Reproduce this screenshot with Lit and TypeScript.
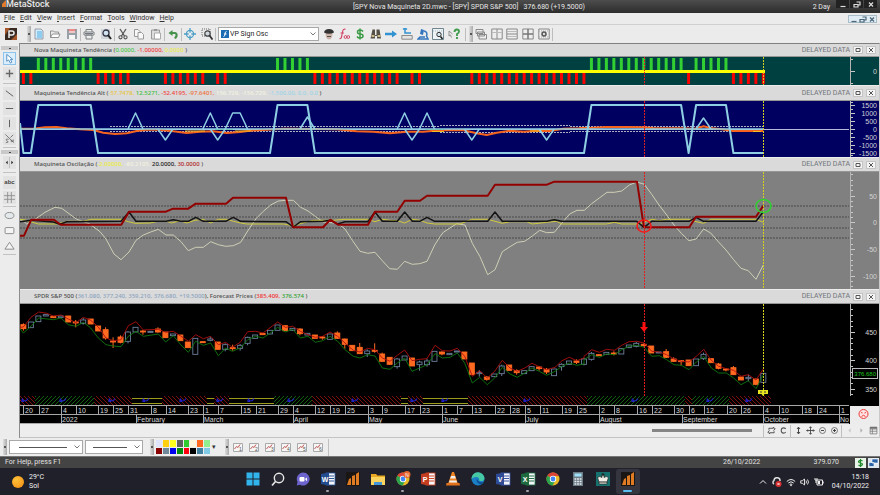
import { LitElement, html, svg, css, nothing } from "lit";
import { customElement, property } from "lit/decorators.js";

type Run = [number, string];

/* Series are stored in thirds of a pixel: each run has its own x origin. */
const series = (runs: Run[], top: number) =>
  runs
    .map(([origin, data]) =>
      data
        .trim()
        .split(/\s+/)
        .map((p) => {
          const [x, y] = p.split(",").map(Number);
          return `${((x + origin) / 3).toFixed(1)},${((y - top) / 3).toFixed(1)}`;
        })
        .join(" ")
    )
    .join(" ");

const A = -60;
const B = 810;
const C = 1680;
const M = 1260;

const barX = (i: number) => 3.4 + 7.474 * i;
const span = (from: number, to: number) => Array.from({ length: to - from + 1 }, (_, k) => from + k);

/* ---------- trend bars ---------- */
const upBars = [...span(2, 9), ...span(34, 38), ...span(76, 88), ...span(90, 94)];
const downBars = [0, 1, ...span(10, 14), ...span(19, 24), 26, 27, ...span(39, 50), 52, 53, ...span(60, 75), 89, ...span(95, 99)];

/* ---------- alternate trend ---------- */
const highRuns = [[2, 9], [34, 38], [76, 88], [90, 94]];
const squareWave =
  "0,22 " +
  span(0, 99)
    .map((i) => `${barX(i).toFixed(1)},${highRuns.some(([a, b]) => i >= a && i <= b) ? 4 : 52}`)
    .join(" ");
const spikes: [number[], number][] = [
  [[14, 15, 16], 12], [[18, 19, 20], 39], [[24, 25, 26], 12], [[25, 26, 27], 39], [[27, 28, 29, 30], 12],
  [[37, 38, 39], 16], [[50, 51, 52], 12], [[51, 52, 53], 39], [[53, 54, 55], 12], [[59, 60, 61], 39],
  [[69, 70, 71], 39], [[90, 91, 92], 17],
];
const orangeRuns: Run[] = [
  [A, "60,266 100,266 135,262 170,261 200,265 240,268 280,270 310,278 345,282 380,280 410,273 440,269 480,269 520,274 560,279 600,275 640,274 680,279 720,276 750,272 800,269 850,266"],
  [B, "0,266 140,268 200,274 250,275 300,280 350,275 400,275 450,271 520,271 560,280 590,285 620,278 660,272 700,275 740,272 780,273 820,266 870,265"],
  [C, "0,264 30,264 80,261 140,261 190,262 220,264 300,265 345,266 371,259 390,264 425,268 460,273 500,273 550,273"],
];

/* ---------- oscillator ---------- */
const oscRed: Run[] = [
  [A, "60,242 72,242 94,194 162,194 182,209 364,209 387,170 498,170 519,161 565,161 587,146 678,146 699,128 858,128 879,217 969,217 991,194 1014,209 1104,209 1125,170 1192,170 1214,137 1260,137 1281,122 1320,122"],
  [M, "0,122 143,122 165,89 321,89 343,80 591,80 612,217 748,217 768,185 948,185 970,152"],
];
const oscWhite: Run[] = [
  [A, "60,198 68,196 80,207 105,193 135,172 165,157 185,160 230,193 268,206 300,230 318,252 342,297 363,314 387,291 408,256 430,240 452,231 475,223 498,240 520,240 543,260 565,287 587,277 610,277 632,260 655,269 677,274 700,272 722,262 745,225 768,191 790,169 812,150 835,138 858,136 880,136 902,157 924,168 947,185 970,201 1013,205 1035,222 1057,256 1080,289 1103,295 1125,292 1147,317 1169,341 1192,343 1214,319 1237,328 1259,326 1281,319 1304,270 1320,245"],
  [M, "10,232 50,206 75,210 97,265 120,305 143,359 165,344 187,290 210,275 232,262 254,259 277,243 299,226 320,233 343,232 365,205 389,177 411,166 433,166 455,146 478,129 501,112 523,112 545,108 568,90 590,81 613,88 635,118 657,150 680,180 702,210 725,236 747,257 768,252 791,222 812,234 835,260 858,285 880,313 903,340 925,347 948,373 970,330"],
];
const oscBlack: Run[] = [
  [A, "60,200 94,196 160,201 180,208 200,200 363,199 387,171 408,199 498,199 520,194 543,199 565,199 587,187 610,199 677,199 700,187 722,199 858,200 880,216 902,200 970,199 991,196 1013,207 1035,200 1103,200 1125,171 1147,199 1192,199 1214,171 1237,199 1259,199 1281,187 1304,199"],
  [M, "0,199 143,199 165,171 187,199 320,199 343,194 365,199 590,199 612,217 635,199 747,199 768,187 791,199 948,199 970,170"],
];
const oscYellow: Run[] = [
  [A, "60,193 75,195 115,207 170,207 205,199 250,199 272,193 363,193 385,200 405,205 450,204 475,199 500,199 515,204 540,197 560,204 585,196 610,193 632,204 655,193 680,193 700,199 722,204 740,207 850,207 880,212 905,205 940,196 1000,196 1035,193 1103,193 1125,200 1147,193 1170,196 1192,197 1214,204 1237,193 1260,196 1281,204 1304,207"],
  [M, "0,207 60,207 95,193 143,193 187,205 210,200 260,200 277,207 320,202 350,199 365,207 500,207 523,202 545,207 600,207 615,200 637,193 655,197 680,193 750,193 768,200 791,205 812,193 948,193 970,202"],
];

/* ---------- price ---------- */
/* kind, body top, body bottom, high, low */
const candles = `o110,122,106,128 g102,119 g84,101 g80,84 o85,89 g84,88 o84,102 o102,105,96,118 g96,106,90,110 o93,108
o114,129 o125,150,118,155 o159,162,148,180 o147,163,142,166 g132,160,130,166 g118,132 o129,132,126,140 g130,133 o123,132,118,134 o132,149
g138,143 o141,158 o162,179 g151,199 o161,164 g153,157,146,160 o162,184 g170,184,166,190 o179,182,170,188 g172,181,168,188
g148,166,146,172 g141,151 o136,140 g127,138 g111,127 o113,128 g121,127 o123,137,121,142 g136,141 o141,151
o147,149,144,155 g138,154 o135,151,130,152 o153,169,152,182 o172,188 o178,197,165,198 g189,197,184,207 o187,190,166,194 o198,220,194,221 o208,229
g213,236,210,242 g204,216 o210,234 g222,230,218,248 g219,230,212,236 g190,220 o192,198,190,202 g196,200 g189,192 o192,213
o225,260 g253,257,246,266 o267,274,264,278 g258,266 g234,257,230,264 o231,247 o248,254,244,260 g248,257 g236,248 o237,242,234,248
o244,252,240,258 g243,263 g229,236,226,248 g219,229 o219,223,214,228 g213,229,210,232 g196,214,192,218 o200,203 g193,199 o195,198,190,202
g182,198 g171,179 g166,175,162,178 o169,173,166,176 o174,195 g192,195 o191,208,183,210 o213,220,208,222 o218,221,216,233 o216,233
g213,233 g199,212,194,216 o212,224 o228,241,225,244 o243,246,240,250 o239,260,234,261 o267,276 g268,272,260,280 o273,289,272,292 g256,283`
  .split(/\s+/)
  .map((c) => {
    const [top, bottom, high = top, low = bottom] = c.slice(1).split(",").map(Number);
    const y = (v: number) => (v - 48) / 3;
    return { up: c[0] === "g", top: y(top), bottom: y(bottom), high: y(high), low: y(low) };
  });
const forecastHigh: Run[] = [
  [A, "60,118 70,117 93,88 116,72 140,76 160,84 183,81 205,93 228,104 250,88 272,97 295,117 318,150 340,158 363,155 385,113 408,101 430,126 475,124 497,133 520,130 542,144 565,160 587,140 610,152 632,145 655,170 677,163 697,178 721,163 743,131 767,130 789,135 833,102 856,118 878,115"],
  [B, "31,130 54,140 76,148 98,145 120,132 143,145 165,165 190,187 210,192 233,181 255,185 277,210 300,220 322,202 344,186 366,218 389,214 411,212 435,172 457,188 480,189 502,181 524,205 547,265 569,248 592,270 614,250 637,217 660,240 682,250 704,240 726,226 748,236 770,245 795,238 816,218 838,208 860,218 882,210"],
  [C, "12,205 35,185 58,193 80,184 104,187 125,172 147,161 170,160 193,165 215,190 238,192 260,200 282,213 304,220 327,222 349,205 371,184 394,217 416,235 439,242 461,247 483,265 505,260 528,276 550,243"],
];
const forecastLow: Run[] = [
  [A, "60,122 70,135 93,115 116,90 160,95 183,90 205,110 228,115 250,103 272,120 295,150 318,170 340,174 363,176 385,145 408,130 430,145 475,138 497,162 520,143 542,170 565,193 587,160 610,172 632,165 655,203 677,180 697,190 721,180 743,155 767,145 789,150 811,135 833,118 856,132 878,124"],
  [B, "31,150 54,145 76,163 98,158 120,145 143,160 165,185 190,205 210,210 233,200 255,204 277,240 300,244 322,225 344,210 366,250 389,240 411,230 435,197 457,210 480,208 502,195 524,225 547,285 569,268 592,290 614,270 637,238 660,258 682,268 704,255 726,240 748,250 770,262 795,250 816,235 838,225 860,232 882,228"],
  [C, "12,215 35,200 58,208 80,198 104,200 125,185 147,175 170,172 193,178 215,205 238,203 260,215 282,230 304,232 327,245 349,222 371,205 394,240 416,255 439,255 461,270 483,290 505,278 528,302 550,260"],
];
/* ribbon: kind and edges, in pixels */
const ribbon: [string, number, number][] = [
  ["r", 0, 15], ["g", 15, 74], ["r", 74, 112], ["y", 112, 142], ["r", 142, 187], ["y", 187, 194], ["r", 194, 209],
  ["y", 209, 254], ["g", 254, 292], ["r", 292, 381], ["y", 381, 388], ["r", 388, 403], ["y", 403, 448], ["r", 448, 567],
  ["g", 567, 665], ["r", 665, 672], ["g", 672, 709], ["r", 709, 751],
];
const cycles = [5, 43, 92, 126, 163, 200, 231, 271, 335, 394, 425, 507, 615, 690, 729];
const days: [number, string][] = [
  [3, "20"], [19, "27"], [41, "4"], [56, "10"], [78, "19"], [93, "25"], [108, "31"], [131, "8"], [146, "14"], [168, "23"],
  [183, "1"], [198, "7"], [221, "15"], [236, "21"], [258, "29"], [273, "4"], [295, "12"], [310, "19"], [325, "25"],
  [348, "3"], [362, "9"], [385, "17"], [400, "23"], [422, "1"], [437, "7"], [452, "13"], [475, "22"], [490, "28"],
  [505, "5"], [520, "11"], [542, "19"], [557, "25"], [579, "2"], [594, "8"], [617, "16"], [632, "22"], [654, "30"],
  [669, "6"], [684, "12"], [707, "20"], [721, "26"], [743, "4"], [759, "10"], [782, "18"], [797, "24"], [819, "1"],
];
const months: [number, string][] = [
  [41, "2022"], [116, "February"], [183, "March"], [273, "April"], [348, "May"], [422, "June"], [505, "July"],
  [579, "August"], [662, "September"], [743, "October"], [819, "Nov"],
];

/* ---------- icons, 12 x 12 ---------- */
const icons: Record<string, unknown> = {
  power: svg`<rect width="12" height="12" fill="#3a2a22"/><path d="M0 0h5L0 7zM12 12H6l6-6z" fill="#a5562a"/><path d="M4 10V3h3a2 2 0 0 1 0 4H4" fill="none" stroke="#eee" stroke-width="1.5"/>`,
  new: svg`<path d="M2 1h6l2 2v8H2z" fill="#d3ecfa" stroke="#889" stroke-width=".8"/><path d="M4 3h5v7H4z" fill="#8fcdf0"/>`,
  open: svg`<path d="M1.500 9.500V3h3l1 1h4v2" fill="none" stroke="#888" stroke-width=".9"/><path d="M1.500 9.500 3.500 6H11L9.500 9.500z" fill="#fff" stroke="#888" stroke-width=".9"/>`,
  save: svg`<path d="M1 1h10v10H1z" fill="#9aa0a8"/><path d="M3 1h6v4H3z" fill="#f3c6c6"/><path d="M3 7h6v4H3z" fill="#f6f6f6"/><path d="M2.500 2h7" stroke="#e05050"/>`,
  print: svg`<path d="M3 4V1.500h6V4M1 4h10v3H1zM3 7h6v4H3z" fill="#eee" stroke="#7a8080" stroke-width="1"/><path d="M2 5.500h8" stroke="#778" stroke-width="1"/>`,
  preview: svg`<path d="M1 1h9v10H1z" fill="#cdd4da"/><circle cx="6" cy="5" r="3" fill="#cfe3f1" stroke="#334" stroke-width="1.300"/><path d="m8 7 3 4" stroke="#222" stroke-width="2"/>`,
  cut: svg`<path d="M3 1l4.500 7M9 1 4.500 8" stroke="#555" stroke-width="1.300"/><circle cx="3.500" cy="9.300" r="1.600" fill="none" stroke="#555" stroke-width="1.100"/><circle cx="8.500" cy="9.300" r="1.600" fill="none" stroke="#555" stroke-width="1.100"/>`,
  copy: svg`<path d="M1.500 1.500H5l2 2v5H1.500z" fill="#f8f8f8" stroke="#999"/><path d="M5 4.500h3.500l2 2v4.500H5z" fill="#f8f8f8" stroke="#999"/>`,
  paste: svg`<path d="M1.500 2h8v9h-8z" fill="#ddd" stroke="#999"/><path d="M4 1h3v2H4z" fill="#999"/><path d="M4.500 5h6v6h-6z" fill="#fff" stroke="#aaa"/>`,
  undo: svg`<path d="M1.500 5 5.500 2v6z" fill="#47924b"/><path d="M4 5h3.500Q10 5 9.500 8L8 10.500" fill="none" stroke="#47924b" stroke-width="2.200"/>`,
  cross: svg`<circle cx="6" cy="6" r="3.600" fill="none" stroke="#4f9fc6" stroke-width="1.200"/><path d="M6 0v12M0 6h12" stroke="#4f9fc6" stroke-width="1.300"/><circle cx="6" cy="6" r="1.500" fill="#e9f3f8"/>`,
  zoomsel: svg`<path d="M1 1h8v7H1z" fill="none" stroke="#666" stroke-dasharray="1 1"/><circle cx="6.500" cy="5.500" r="2.700" fill="#d0d8de" stroke="#444" stroke-width="1.200"/><path d="m8.500 7.500 3 4" stroke="#333" stroke-width="1.800"/>`,
  expert: svg`<path d="M2.500 5h7q0 6-3.500 6.500Q2.500 11 2.500 5z" fill="#cdb4a8"/><path d="M1 4.500Q1.500 1 6 1t5 3.500Q6 7 1 4.500z" fill="#333"/><path d="M4 8.500h4" stroke="#555"/>`,
  fx: svg`<path d="M7.500 1.300Q5 .5 4.500 4L3.500 9Q3 11 1.500 10.500M2.500 5H6" fill="none" stroke="#d24a68" stroke-width="1.200"/><circle cx="7.500" cy="9" r="1.400" fill="none" stroke="#d24a68"/><circle cx="10.300" cy="9" r="1.400" fill="none" stroke="#d24a68"/>`,
  dollar: svg`<path d="M9 3.500Q8 2 6 2 3.500 2 3.500 4T6 6q3 0 3 2t-3 2q-2 0-3-1.500M6 .5v11" fill="none" stroke="#3a9a45" stroke-width="1.500"/>`,
  binoc: svg`<path d="M2.500 1.500h2.500V7H6.500V1.500H9.500L11 10.500H7V8H5v2.500H.500z" fill="#555044"/><path d="M1.500 8h3M7.500 8h3" stroke="#c9b98c" stroke-width="2"/>`,
  arrow: svg`<path d="M0 4.700h7V2.500L12 6 7 9.500V7.300H0z" fill="#3292d2"/>`,
  tray: svg`<path d="M.800 7.500h10.400v3.700H.800z" fill="#e3e3e3" stroke="#8b8b8b"/><path d="M2 1.500 4 0l2 1.500M4 .500V5h6" fill="none" stroke="#3292d2" stroke-width="1.500"/>`,
  scope: svg`<path d="M4 1l3 1-1 5-3-1z" fill="#3275bd"/><path d="M7 3q4 1 2.500 5L11 11H1l2-2h5" fill="none" stroke="#3275bd" stroke-width="1.500"/>`,
  explore: svg`<path d="M.5.5h11v11H.5z" fill="#edf3f5" stroke="#70858d"/><path d="M1 3h10" stroke="#a9b9c0" stroke-dasharray="1 1"/><circle cx="7" cy="6.500" r="2.200" fill="#d7e6ee" stroke="#333"/><path d="m8.500 8.500 2 2.500" stroke="#222" stroke-width="1.600"/>`,
  help: svg`<path d="M1 3v5l1.500-1 1 2.500M1 3l3.500 3" fill="none" stroke="#888" stroke-width=".9"/><path d="M6.500 4q0-2.500 2.300-2.500T11 3.500Q11 5 9 6v2M9 9v2" fill="none" stroke="#3d9a48" stroke-width="1.800"/>`,
  cascade: svg`<path d="M1 1.500h7v4H1zM2.500 4h7v4h-7zM4 6.500h7.500v4.500H4z" fill="#eee" stroke="#888"/>`,
  tileV: svg`<path d="M.8 1h10.400v10H.8zM6 1v10" fill="#eee" stroke="#888"/><path d="M1 4.500h10" stroke="#bbb"/>`,
  tileH: svg`<path d="M.8 1h10.400v10H.8zM1 6h10" fill="#eee" stroke="#888"/><path d="M1 3.500h10M1 8.500h10" stroke="#bbb"/>`,
  tile4: svg`<path d="M.8 1h10.400v10H.8z" fill="#eee" stroke="#888"/><path d="M6 1v10M1 6h10" stroke="#777" stroke-width="1.500"/>`,
  gear: svg`<path d="M.8 1h10.400v10H.8z" fill="#eee" stroke="#888"/><path d="M1 3h10M1 9h10" stroke="#aaa" stroke-dasharray="1 1"/><circle cx="6" cy="6" r="2" fill="#ddd" stroke="#555" stroke-width="1.500"/>`,
  pointer: svg`<path d="M3 1.500v7.500l2-1.500 2 3.500 1.500-1L7 7h2.500z" fill="#fff" stroke="#4a8bbf"/>`,
  plus: svg`<path d="M6 2v8M2 6h8" stroke="#666" stroke-width="1.500"/>`,
  diag: svg`<path d="m2 3 8 6" stroke="#555"/>`,
  horiz: svg`<path d="M2 6h8" stroke="#555"/>`,
  vert: svg`<path d="M6 2v8" stroke="#555"/>`,
  sn: svg`<path d="m1.500 1.500 9 9M10 2 7 5M5 7q-2-1-2.500 0T4 9 2 10.500M8 10V7.500l2 2V7" fill="none" stroke="#666" stroke-width=".9"/>`,
  arrows: svg`<path d="M4 4 2 6l2 2zM8 4l2 2-2 2z" fill="#222"/><path d="M6 0v12" stroke="#bbb"/>`,
  grid: svg`<path d="M4 0v12M8 0v12M0 4h12M0 8h12" stroke="#888" stroke-width=".9"/>`,
  ellipse: svg`<ellipse cx="6" cy="6" rx="4.800" ry="3.300" fill="#e3e8ea" stroke="#888"/>`,
  rect: svg`<rect x="1.200" y="2.800" width="9.600" height="6.600" rx="1" fill="#f4f4f4" stroke="#888"/>`,
  tri: svg`<path d="m6 2.500 5 7.500H1z" fill="#f4f4f4" stroke="#888"/>`,
  refresh: svg`<path d="M2.500 5V3h6V1.500L11 4 8.500 6M9.500 7v2h-6v1.500L1 8l2.500-2" fill="none" stroke="#444" stroke-width="1.200"/>`,
  loop: svg`<path d="M9 4Q8 2.500 6 2.500 3 2.500 3 6t3 3.500Q8 9.500 9 8" fill="none" stroke="#555" stroke-width="1.400"/>`,
  updown: svg`<path d="M6 2v8M4 4l2-2.500L8 4M4 8l2 2.500L8 8" fill="none" stroke="#333" stroke-width="1.200"/>`,
  move: svg`<path d="M6 1v10M1 6h10M4.500 2.500 6 1l1.500 1.500M4.500 9.500 6 11l1.500-1.500M2.500 4.500 1 6l1.500 1.500M9.500 4.500 11 6 9.500 7.500" fill="none" stroke="#444" stroke-width="1.200"/>`,
  minus: svg`<circle cx="6" cy="6" r="4" fill="none" stroke="#555"/><path d="M4 6h4" stroke="#333" stroke-width="1.200"/>`,
  zoomin: svg`<circle cx="6" cy="6" r="4" fill="none" stroke="#555"/><path d="M4 6h4M6 4v4" stroke="#333" stroke-width="1.200"/>`,
  left: svg`<path d="M7.500 3 4.500 6l3 3z" fill="#c8c8c8"/>`,
  right: svg`<path d="m4.500 3 3 3-3 3z" fill="#b0b0b0"/>`,
  sheet: svg`<path d="M1.500 1.500h9v9h-9zM1.500 4h9M1.500 7h9M4.500 4v6.500" fill="#eee" stroke="#777"/><path d="M1.500 2.500h9" stroke="#666" stroke-width="2"/>`,
};
const icon = (name: string) => html`<svg class="icon" viewBox="0 0 12 12" aria-hidden="true">${icons[name]}</svg>`;

const office = (color: string, dark: string, letter: string) => svg`
  <rect x="6" y="2" width="9" height="12" fill="#f4f6fa" stroke=${color} stroke-width=".8"/>
  <path d="M9 5h5M9 7.500h5M9 10h5" stroke=${color}/><path d="M1 3l8-1.500v13L1 13z" fill=${dark}/>
  <text x="5" y="11" text-anchor="middle" font-size="7" font-weight="700" fill="#fff">${letter}</text>`;
const chrome = svg`<circle cx="8" cy="8" r="6.500" fill="#e9b928"/><path d="M8 8 2.400 4.700A6.500 6.500 0 0 1 13.700 5H8z" fill="#dc4437"/><path d="M8 8 2.400 4.700A6.500 6.500 0 0 0 7.500 14.500L10.500 9.500z" fill="#2ba24c"/><circle cx="8" cy="8" r="3.200" fill="#fff"/><circle cx="8" cy="8" r="2.400" fill="#4285f4"/>`;
const stock = svg`<path d="M1 1h14v14H1z" fill="#191614"/><path d="M2 14 4 8l2-1v7zM7 14V5l3-1v10zM11 14V3l3-2v13z" fill="#df7b23"/>`;
const apps: { name: string; art: unknown; run?: boolean; active?: boolean }[] = [
  { name: "Start", art: svg`<path d="M1.500 1.500h6v6h-6zM8.500 1.500h6v6h-6zM1.500 8.500h6v6h-6zM8.500 8.500h6v6h-6z" fill="#31b4ec"/>` },
  { name: "Search", art: svg`<circle cx="9" cy="7" r="4.700" fill="#2c2d36" stroke="#e8e8e8" stroke-width="1.400"/><path d="m5.500 10.500-3.500 4" stroke="#e8e8e8" stroke-width="1.700"/>` },
  { name: "Chat", art: svg`<path d="M8 1.500a6.500 6.500 0 1 1-3 12.200L1.800 14.500 2.500 11A6.500 6.500 0 0 1 8 1.500z" fill="#6d63cd"/><rect x="4.500" y="6" width="5" height="4.500" rx="1" fill="#fff"/><path d="m10 8 2-1.500v4z" fill="#fff"/>` },
  { name: "Word", art: office("#2b579a", "#234d91", "W"), run: true },
  { name: "MetaStock charts", art: stock },
  { name: "Files", art: svg`<path d="M1 3h5l1.500 1.500H15V14H1z" fill="#e9a922"/><path d="M1 6h14v8H1z" fill="#fad45e"/><path d="M4 14v-3h8v3" fill="#4296d8"/>` },
  { name: "Chrome, profile N", art: svg`${chrome}<circle cx="12" cy="3.500" r="3.500" fill="#e5662a"/><text x="12" y="5.500" text-anchor="middle" font-size="5" fill="#fff">N</text>`, run: true },
  { name: "PowerPoint", art: office("#d24726", "#c43d20", "P") },
  { name: "VLC", art: svg`<path d="m7 1h2l4 12H3z" fill="#ef8321"/><path d="M6 5h4l.800 2.500H5.200zM4.500 9.500h7l.5 2H4z" fill="#eee"/><path d="M1.500 12h13l.5 2.500H1z" fill="#e2711b"/>` },
  { name: "Edge", art: svg`<circle cx="8" cy="8" r="6.500" fill="#1a7fc4"/><path d="M1.500 8A6.500 6.500 0 0 1 14.500 7.500Q14 10.500 10 10q-1.500-.5-.8-2Q8.500 5.500 5.500 6 2.500 6.500 1.500 8z" fill="#46c8a5"/><path d="M7 7.500Q5.500 12 11 13.500 14 12 13.500 11 8 12 7 7.500z" fill="#0e4d91"/>` },
  { name: "Visio", art: office("#3955a3", "#304b95", "V") },
  { name: "Excel", art: office("#217346", "#1d6a3f", "X"), run: true },
  { name: "Chrome", art: chrome },
  { name: "Calculator", art: svg`<path d="M3 1h10v14H3z" fill="#6e7c86"/><path d="M4.500 2.500h7v3h-7z" fill="#9fe0f6"/><path d="M4.500 8h7M4.500 10.500h7M4.500 13h7" stroke="#e8edf0" stroke-width="1.500" stroke-dasharray="1.800 .8"/>` },
  { name: "Chess", art: svg`<path d="M1 1h14v14H1z" fill="#15726f"/><path d="M4 13h8v-2l1.500-4.500Q11 4.500 9 6.500V4H7v2.500Q5 4.500 2.500 6.500L4 11z" fill="#f0f0e8" stroke="#222" stroke-width=".7"/><path d="M8 2v3M6.500 3.300h3M4 11h8" stroke="#222"/>` },
  { name: "MetaStock", art: stock, active: true },
];

type Value = [string, string];

/** One chart window: caption strip, plot and value scale. */
@customElement("chart-panel")
export class ChartPanel extends LitElement {
  @property() name = "";
  @property({ attribute: false }) values: Value[] = [];
  @property({ attribute: false }) extra?: { label: string; values: Value[] };

  static styles = css`
    :host { display: block; }
    .caption { display: flex; align-items: center; height: 15px; padding: 0 3px 0 14px; background: #dadada; color: #505050; border-top: 1px solid #ececec; border-bottom: 1px solid #969696; box-sizing: border-box; white-space: pre; }
    :host([first]) .caption { height: 13px; border-top: 0; }
    :host([tall]) .caption { height: 16px; }
    h2 { flex: 1; min-width: 0; overflow: hidden; margin: 0; font: 500 6px/9px "Noto Sans", sans-serif; }
    .tag { color: #70757b; }
    button { width: 10px; height: 8px; margin-left: 3px; padding: 0; border: 1px solid #c4c4c4; background: #f4f4f4; display: grid; place-items: center; }
    svg { width: 6px; height: 6px; }
    .body { display: flex; }
  `;

  private list(values: Value[]) {
    return values.map(([v, c], i) => html`<span style="color:${c}">${v}${i < values.length - 1 ? ", " : ""}</span>`);
  }

  render() {
    return html`
      <div class="caption">
        <h2>${this.name} (${this.list(this.values)}${this.extra ? html`), ${this.extra.label} (${this.list(this.extra.values)} )` : " )"}</h2>
        <span class="tag">DELAYED DATA</span>
        <button aria-label="Maximize"><svg viewBox="0 0 6 6"><path d="M1 1.500h4v3H1z" fill="none" stroke="#555"/></svg></button>
        <button aria-label="Close"><svg viewBox="0 0 6 6"><path d="m1 1 4 4M5 1 1 5" stroke="#555"/></svg></button>
      </div>
      <div class="body"><slot></slot></div>`;
  }
}

@customElement("app-root")
export class AppRoot extends LitElement {
  static styles = css`
    :host { display: flex; flex-direction: column; min-height: 100vh; background: #ececec; font: 7px/9px Roboto, "Noto Sans", sans-serif; color: #333; }
    * { box-sizing: border-box; }
    button { font: inherit; color: inherit; padding: 0; border: 0; background: none; display: grid; place-items: center; }
    .icon { width: 12px; height: 12px; display: block; }

    .titlebar { display: grid; grid-template-columns: 1fr auto 1fr; align-items: center; height: 13px; background: linear-gradient(#4d4d4d, #2c2c2c); color: #e6e6e6; white-space: pre; }
    .brand { display: flex; align-items: flex-start; height: 13px; margin: 0; padding-left: 2px; font: 500 9px/9px Roboto, sans-serif; }
    .brand svg { width: 4px; height: 7px; }
    .doc { padding-left: 58px; padding-top: 1px; }
    .frame { display: flex; justify-content: flex-end; align-items: flex-start; height: 13px; padding-right: 3px; }
    .period { padding: 3px 5px 0 0; }
    .frame button { width: 13px; height: 8px; margin-left: 1px; background: #222; }
    .winicon { width: 8px; height: 7px; }

    .menubar { display: flex; align-items: center; gap: 5px; height: 12px; padding: 0 3px 0 4px; background: #ebebeb; border-bottom: 1px solid #cfcfcf; }
    .menubar button::first-letter { text-decoration: underline; }
    .menubar .menu { display: block; }
    .mdi { display: flex; margin-left: auto; border: 1px solid #a9bdc9; background: #dfecf4; }
    .mdi button { width: 9px; height: 6px; }

    .toolbar { display: flex; align-items: center; height: 18px; background: #ebebeb; }
    .logo { width: 14px; margin: 0 9px 0 4px; }
    .grip { width: 4px; height: 16px; background: linear-gradient(90deg, #ddd, #aaa); display: grid; place-items: center; }
    .grip::after { content: ""; width: 2px; height: 2px; background: #555; }
    .tools { display: grid; grid-auto-flow: column; grid-auto-columns: 1fr; border-right: 1px solid #bdbdbd; height: 13px; align-items: center; }
    .tools.one { width: 17px; }
    .tools.two { width: 34px; }
    .tools.three { width: 50px; }
    .tools.nine { width: 145px; padding-right: 3px; margin-right: 3px; }
    .tools.five { width: 80px; }
    .symbol { position: relative; width: 101px; margin: 0 2px; }
    .symbol svg { position: absolute; left: 3px; top: 3px; width: 8px; height: 8px; }
    select { display: block; width: 100%; height: 14px; border: 1px solid #a8a8a8; color: #222; font: inherit; appearance: none; background-color: #fff; background-repeat: no-repeat; border-radius: 0; padding: 0 0 0 11px; }
    .symbol .chev, .line .chev { left: auto; right: 3px; top: 5px; width: 6px; height: 4px; position: absolute; }

    .workspace { display: flex; flex: 1; }
    .palette { width: 19px; flex: none; display: flex; flex-direction: column; align-items: center; background: #ececec; gap: 2px; padding-top: 3px; }
    .palette .tool { width: 13px; height: 13px; border: 1px solid transparent; background: #e2e2e2; }
    .palette .tool.on { background: #dcedfb; border-color: #8ec4ec; }
    .palette .bare { background: none; }
    .palette .hgrip { width: 17px; height: 4px; background: #c9c9c9; display: grid; place-items: center; }
    .palette .hgrip::after { content: ""; width: 2px; height: 1px; background: #444; }
    .palette hr { width: 13px; margin: 0; border: 0; border-top: 1px solid #c2c2c2; }
    .palette hr.wide { margin: 1px 0; }
    .palette .icon { width: 11px; height: 11px; }
    .palette .abc { font: 700 6px/9px "Liberation Sans", sans-serif; color: #444; }
    .charts { flex: 1; min-width: 0; display: flex; flex-direction: column; border-left: 1px solid #8d8d8d; border-top: 1px solid #808080; border-right: 1px solid #c9c9c9; }
    .plot { flex: 1; min-width: 0; overflow: hidden; display: block; }
    .axis { width: 30px; flex: none; display: block; font: 7px "Liberation Sans", Arial, sans-serif; fill: #d4d4d4; }
    .axis .last { font-size: 6px; }
    .trend { height: 28px; background: #004040; }
    .alt { height: 56px; background: #000060; }
    .osc { height: 117px; background: #808080; }
    .price { height: 120px; background: #000; }
    .plot.price { font: 7px "Liberation Sans", Arial, sans-serif; }
    .ln { fill: none; stroke-linejoin: round; }

    .scrollrow { display: flex; align-items: center; justify-content: flex-end; height: 14px; background: #ededed; border-bottom: 1px solid #c3c3c3; }
    .thumb { width: 100px; height: 3px; margin-right: 10px; background: #858585; }
    .scrollrow button { width: 12px; height: 12px; }
    .scrollrow .icon { width: 9px; height: 9px; }
    .bar { width: 1px; height: 12px; background: #c0c0c0; margin: 0 1px; }

    .styles { display: flex; align-items: center; height: 18px; background: #ededed; padding-left: 3px; }
    .line { position: relative; margin-left: 2px; width: 74px; }
    .line.thin { width: 58px; }
    .line select { padding: 0; background-image: linear-gradient(#555, #555); background-size: 48px 1px; background-position: 9px 6px; }
    .line.thin select { background-size: 34px 1px; background-position: 7px 6px; }
    .styles .grip { margin-left: 7px; }
    .styles .grip:first-child { margin-left: 0; }
    .swatches { display: grid; grid-template-columns: repeat(8, 1fr); gap: 1px; width: 54px; height: 14px; margin-left: 2px; }
    .swatches button { border: 0; }
    .more { width: 8px; }
    .templates { display: flex; padding: 0 2px 0 1px; border-right: 1px solid #c0c0c0; height: 17px; align-items: center; }
    .templates button { width: 16px; }
    .templates svg { width: 10px; height: 10px; font: 5px "Liberation Sans", sans-serif; }

    .status { display: flex; align-items: center; height: 12px; background: #444; color: #e2e2e2; padding: 0 1px 0 5px; border-top: 1px solid #777; }
    .status .help { flex: 1; }
    .status .date { width: 90px; }
    .status .last { width: 26px; margin-right: 14px; text-align: right; }
    .status .icon { width: 11px; height: 10px; margin-left: 2px; }

    .taskbar { display: grid; grid-template-columns: 1fr auto 1fr; align-items: center; height: 27px; background: #20202a; color: #f0f0f0; }
    .weather { display: flex; align-items: center; gap: 5px; padding-left: 12px; text-align: left; }
    .sun { width: 12px; height: 12px; border-radius: 50%; background: radial-gradient(circle at 35% 30%, #ffc13a, #f08a10); }
    .apps { display: flex; gap: 1px; }
    .app { width: 24px; height: 25px; border-radius: 3px; grid-template-rows: 20px 3px; }
    .app svg { width: 16px; height: 16px; font-family: "Liberation Sans", sans-serif; }
    .app i { width: 3px; height: 2px; border-radius: 1px; }
    .app.run i { background: #a5a5ad; }
    .app.active { background: #35353f; }
    .app.active i { width: 9px; background: #58bdf0; }
    .systray { display: flex; align-items: center; justify-content: flex-end; gap: 4px; padding-right: 11px; }
    .systray svg { width: 10px; height: 10px; }
    .clock { text-align: right; padding-left: 4px; }
  `;

  private cursor(height: number) {
    return svg`
      <line x1="624.5" x2="624.5" y1="0" y2=${height} stroke="#e02020" stroke-dasharray="2 1"/>
      <line x1="743.5" x2="743.5" y1="0" y2=${height} stroke="#d2d21e" stroke-dasharray="2 1"/>`;
  }

  private scale(height: number, labels: [number, string][], minor: number[], cls: string, extra: unknown = nothing) {
    return html`<svg class="axis ${cls}">
      <line x1="1.5" x2="1.5" y1="0" y2=${height} stroke="#b4b4b4"/>
      ${minor.map((y) => svg`<path d="M2 ${y}.500h2" stroke="#c8c8c8"/>`)}
      ${labels.map(([y, t]) => svg`<path d="M2 ${y}.500h4" stroke="#c8c8c8"/><text x="28" y=${y + 3} text-anchor="end">${t}</text>`)}
      ${extra}
    </svg>`;
  }

  private trend() {
    return html`<svg class="plot trend" role="img" aria-label="Trend bars">
      ${upBars.map((i) => svg`<rect x=${barX(i) - 1.5} y="1" width="3" height="12" fill="#32d032"/>`)}
      ${downBars.map((i) => svg`<rect x=${barX(i) - 1.5} y="15" width="3" height="12" fill="#f80000"/>`)}
      <rect x="0" y="13" width="745" height="3" fill="#ffff00"/>
      ${this.cursor(28)}
    </svg>${this.scale(28, [[14, "0"]], [2, 26], "trend")}`;
  }

  private alt() {
    const spike = ([idx, peak]: [number[], number]) =>
      idx.map((i, k) => `${barX(i).toFixed(1)},${k === 0 || k === idx.length - 1 ? 28 : peak}`).join(" ");
    return html`<svg class="plot alt" role="img" aria-label="Alternate trend">
      <line x1="0" x2="100%" y1="28.5" y2="28.5" stroke="#b8b8d8"/>
      <path d="M90 25.500H420M420 24.500H550M550 25.500H743M90 30.500H420M420 31.500H550M550 30.500H743" stroke="#dcdcdc" stroke-dasharray="2 1" opacity=".8"/>
      <polyline class="ln" points=${series(orangeRuns, 183)} stroke="#f4641e" stroke-width="2"/>
      <path d="M165 30h20M215 30h16M412 30.500h12M510 30h12M733 30.500h8" stroke="#f0c020" stroke-width="1"/>
      <path d="M195 28.500h18M405 28.500h20" stroke="#32a032"/>
      <line x1="0" x2="743" y1="28" y2="28" stroke="#8fcfe4" stroke-width="1.500"/>
      ${spikes.map((s) => svg`<polyline class="ln" points=${spike(s)} stroke="#8fcfe4" stroke-width="1.500"/>`)}
      <polyline class="ln" points=${squareWave} stroke="#8fcfe4" stroke-width="2"/>
      ${this.cursor(56)}
    </svg>${this.scale(56, [[4, "1500"], [12, "1000"], [20, "500"], [28, "0"], [36, "-500"], [44, "-1000"], [52, "-1500"]], [1, 8, 16, 24, 32, 40, 48, 54], "alt")}`;
  }

  private osc() {
    return html`<svg class="plot osc" role="img" aria-label="Oscillator">
      ${[34, 45, 56, 66].map((y) => svg`<line x1="0" x2="100%" y1=${y} y2=${y} stroke="#484848" stroke-dasharray="2 1"/>`)}
      <polyline class="ln" points=${series(oscWhite, 51)} stroke="#cfcfb6"/>
      <polyline class="ln" points=${series(oscYellow, 51)} stroke="#cfc93c"/>
      <polyline class="ln" points=${series(oscBlack, 51)} stroke="#141414" stroke-width="1.500"/>
      <polyline class="ln" points=${series(oscRed, 51)} stroke="#920000" stroke-width="2"/>
      ${this.cursor(117)}
      <ellipse cx="624" cy="54" rx="7" ry="6" fill="none" stroke="#f81818" stroke-width="1.500"/>
      <ellipse cx="743.5" cy="34" rx="7.500" ry="6.500" fill="none" stroke="#30d030" stroke-width="1.500"/>
    </svg>${this.scale(117, [[24, "50"], [50, "0"], [77, "-50"], [104, "-100"]], [2, 8, 13, 18, 29, 34, 40, 45, 56, 61, 66, 72, 82, 88, 93, 98, 109, 114], "osc")}`;
  }

  private price() {
    const face = svg`
      <rect x="1" y="102" width="29" height="18" fill="#ececec"/>
      <circle cx="14.500" cy="110" r="4.500" fill="#fde4e4" stroke="#ee3b3b"/>
      <path d="M12 108.500l1.500.5M17 108.500l-1.500.5M12.500 112.500q2-2.500 4 0" fill="none" stroke="#ee3b3b"/>
      <rect x="3.500" y="64.500" width="25" height="10" fill="#000" stroke="#bbb"/>
      <text class="last" x="27" y="72" text-anchor="end" fill="#1fc01f">376.680</text>`;
    return html`<svg class="plot price" role="img" aria-label="Daily prices">
      <defs>
        <pattern id="hr" width="4" height="4" patternUnits="userSpaceOnUse"><path d="M-1-1l6 6M-1 3l2 2M3-1l2 2" stroke="#a01414" stroke-width=".8"/></pattern>
        <pattern id="hg" width="4" height="4" patternUnits="userSpaceOnUse"><path d="M-1 5l6-6M-1 1l2-2M3 5l2-2" stroke="#147a14" stroke-width=".8"/></pattern>
      </defs>
      ${candles.map((c, i) => {
        const x = barX(i);
        const stroke = c.up ? "#6b7f9c" : "#ff6a20";
        return svg`<line x1=${x} x2=${x} y1=${c.high} y2=${c.low} stroke=${stroke}/>
          <rect x=${x - 2.5} y=${c.top} width="5" height=${Math.max(c.bottom - c.top, 1)} fill=${c.up ? "#000" : "#ff6a20"} stroke=${stroke} stroke-width=".9"/>`;
      })}
      <polyline class="ln" points=${series(forecastHigh, 48)} stroke="#b01010" stroke-width=".9"/>
      <polyline class="ln" points=${series(forecastLow, 48)} stroke="#0e780e" stroke-width=".9"/>
      ${ribbon.map(([k, a, b]) =>
        k === "y"
          ? svg`<path d="M${a} 94.500H${b}M${a} 99.500H${b}" stroke="#9c9c1c"/>`
          : svg`<rect x=${a} y="92" width=${b - a} height="9" fill="url(#h${k})"/>`
      )}
      ${cycles.map((x) => svg`<path d="M${x - 3} 94.500q3 5 6 0M${x - 3} 95.500v2h2" fill="none" stroke="#2020c8" stroke-width="1.200"/>`)}
      ${this.cursor(92)}
      <path d="M622.500 18h3v5h2.500l-4 5-4-5h2.500z" fill="#ff1010"/>
      <path d="M738 86h10v4h-3.500l-1.500 2-1.500-2H738z" fill="#e6e61e"/><path d="M740 88h2M744 88h2" stroke="#333"/>
      <path d="M0 101.500H829M0 110.500H829M0 119.500H829" stroke="#a8a8a8"/>
      ${days.map(([x, t]) => svg`<path d="M${x}.500 102v8" stroke="#a8a8a8"/><text x=${x + 2} y="109" fill="#dcdcdc">${t}</text>`)}
      ${months.map(([x, t]) => svg`<path d="M${x}.500 111v8" stroke="#a8a8a8"/><text x=${x + 1} y="118" fill="#dcdcdc">${t}</text>`)}
    </svg>${this.scale(92, [[28, "450"], [56, "400"], [85, "350"]], [5, 11, 17, 22, 34, 39, 45, 51, 62, 68, 73, 79, 90], "price", face)}`;
  }

  private group(cls: string, names: string[]) {
    return html`<div class="tools ${cls}">${names.map((n) => html`<button aria-label=${n}>${icon(n)}</button>`)}</div>`;
  }

  private windowButtons(color: string) {
    const art: [string, string][] = [["Minimize", "M1.500 5.500h5"], ["Restore", "M3.500 1h3.500v3H5M1 3.500h4v2.500H1z"], ["Close", "m2 1.500 4 4M6 1.500l-4 4"]];
    return art.map(([n, d]) => html`<button aria-label=${n}><svg class="winicon" viewBox="0 0 8 7"><path d=${d} fill="none" stroke=${color} stroke-width="1.200"/></svg></button>`);
  }

  private tool(name: string, cls = "") {
    return html`<button class="tool ${cls}" aria-label=${name}>${icon(name)}</button>`;
  }

  render() {
    const chev = html`<svg class="chev" viewBox="0 0 6 4" aria-hidden="true"><path d="m.5.5 2.500 2.500L5.500.5" fill="none" stroke="#777"/></svg>`;
    const colors = ["#e0e4fa", "#ffcf10", "#ffff20", "#606060", "#30cc30", "#fff6dc", "#ff6a20", "#90f090", "#8b0000", "#708898", "#0000f0", "#008a10", "#ff0010", "#000000", "#4080a0", "#80cce8"];
    return html`
      <header class="titlebar">
        <h1 class="brand"><svg viewBox="0 0 4 7"><path d="M0 7V4l4-4v7z" fill="#e07a2a"/></svg>MetaStock</h1>
        <span class="doc">[SPY Nova Maquineta 2D.mwc - [SPY] SPDR S&amp;P 500]   376.680 (+19.5000)</span>
        <div class="frame"><span class="period">2 Day</span>${this.windowButtons("#ddd")}</div>
      </header>
      <nav class="menubar">
        ${["File", "Edit", "View", "Insert", "Format", "Tools", "Window", "Help"].map((m) => html`<button class="menu">${m}</button>`)}
        <div class="mdi">${this.windowButtons("#4b6577")}</div>
      </nav>
      <div class="toolbar">
        <button class="logo" aria-label="Power Console">${icon("power")}</button>
        <span class="grip"></span>
        ${this.group("three", ["new", "open", "save"])}
        ${this.group("two", ["print", "preview"])}
        ${this.group("three", ["cut", "copy", "paste"])}
        ${this.group("one", ["undo"])}
        ${this.group("two", ["cross", "zoomsel"])}
        <div class="symbol">
          <select aria-label="Indicator"><option>VP Sign Osc</option></select>
          <svg viewBox="0 0 8 8" aria-hidden="true"><path d="M0 0h8v8H0z" fill="#1c6cb4"/><path d="M5.500 1.500Q4 1.500 4 4T2.500 6.500M3 4h2.500" fill="none" stroke="#fff"/></svg>
          ${chev}
        </div>
        ${this.group("nine", ["expert", "fx", "dollar", "binoc", "arrow", "tray", "scope", "explore", "help"])}
        <span class="grip"></span>
        ${this.group("five", ["cascade", "tileV", "tileH", "tile4", "gear"])}
      </div>
      <main class="workspace">
        <aside class="palette">
          <span class="hgrip"></span>
          ${this.tool("pointer", "on")}${this.tool("plus")}
          <hr class="wide" />
          ${this.tool("diag")}${this.tool("horiz")}${this.tool("vert")}${this.tool("sn")}
          <hr />
          <span class="hgrip"></span>
          ${this.tool("arrows")}
          <hr class="wide" />
          <button class="tool abc">abc</button>${this.tool("grid")}
          <hr />
          ${this.tool("ellipse", "bare")}${this.tool("rect", "bare")}${this.tool("tri", "bare")}
          <hr />
        </aside>
        <section class="charts">
          <chart-panel first name="Nova Maquineta Tendência" .values=${[["0.0000", "#4fc84f"], ["-1.00000", "#f04040"], ["0.0000", "#ecec50"]]}>${this.trend()}</chart-panel>
          <chart-panel tall name="Maquineta Tendência Alt" .values=${[["-57.7478", "#e8c440"], ["12.5271", "#3cc03c"], ["-52.4195", "#f04040"], ["-97.6401", "#f07038"], ["156.729", "#f4f4e0"], ["-156.729", "#f4f4e0"], ["-1,500.00", "#9ed4e6"], ["0.0", "#9ed4e6"], ["0.0", "#9ed4e6"]]}>${this.alt()}</chart-panel>
          <chart-panel name="Maquineta Oscilação" .values=${[["-2.00000", "#ecec40"], ["-80.2105", "#f2f2de"], ["20.0000", "#222"], ["30.0000", "#b02828"]]}>${this.osc()}</chart-panel>
          <chart-panel name="SPDR S&amp;P 500" .values=${[["361.080", "#8ca4c0"], ["377.240", "#8ca4c0"], ["359.210", "#8ca4c0"], ["376.680", "#8ca4c0"], ["+19.5000", "#8ca4c0"]]} .extra=${{ label: "Forecast Prices", values: [["385.409", "#f03030"], ["376.574", "#2ca02c"]] }}>${this.price()}</chart-panel>
          <div class="scrollrow">
            <div class="thumb"></div>
            <span class="bar"></span>${["refresh", "loop"].map((n) => html`<button aria-label=${n}>${icon(n)}</button>`)}
            <span class="bar"></span>${["updown", "move", "minus", "zoomin"].map((n) => html`<button aria-label=${n}>${icon(n)}</button>`)}
            <span class="bar"></span>${["left", "right", "sheet"].map((n) => html`<button aria-label=${n}>${icon(n)}</button>`)}
          </div>
        </section>
      </main>
      <div class="styles">
        <span class="grip"></span>
        <div class="line"><select aria-label="Line style"><option></option></select>${chev}</div>
        <div class="line thin"><select aria-label="Line weight"><option></option></select>${chev}</div>
        <span class="grip"></span>
        <div class="swatches">${colors.map((c) => html`<button aria-label=${c} style="background:${c}"></button>`)}</div>
        <button class="more" aria-label="More colors">▾</button>
        <span class="grip"></span>
        <div class="templates">
          ${[1, 2, 3, 4, 5, 6].map((n) => html`<button aria-label="Template ${n}"><svg viewBox="0 0 10 10"><path d="M.5 1.500h9v8h-9z" fill="#f6f6f6" stroke="#a9a9a9"/><path d="m1.500 7 2-2.500 1.500 1 2-3" fill="none" stroke="#c05858"/><text x="6" y="9" fill="#555">${n}</text></svg></button>`)}
        </div>
      </div>
      <div class="status">
        <span class="help">For Help, press F1</span><span class="date">26/10/2022</span><span class="last">379.070</span>
        <svg class="icon" viewBox="0 0 11 10"><path d="M0 0h11v10H0z" fill="#e8f4e8"/><path d="M7.500 3Q5.500 1.500 4 3t1.500 2 1.500 2-3.500 0M5.500 1v8" fill="none" stroke="#1e8a2c" stroke-width="1.200"/></svg>
        <svg class="icon" viewBox="0 0 11 10"><path d="M0 0h11v10H0z" fill="#dfe6ee"/><path d="M4 1h6v4H4zM1 4.500h5v4H1z" fill="#2a62a8" stroke="#fff" stroke-width=".6"/></svg>
      </div>
      <footer class="taskbar">
        <div class="weather"><span class="sun"></span><span>29°C<br />Sol</span></div>
        <div class="apps">
          ${apps.map((a) => html`<button class="app ${a.run ? "run" : ""} ${a.active ? "active" : ""}" aria-label=${a.name}><svg viewBox="0 0 16 16">${a.art}</svg><i></i></button>`)}
        </div>
        <div class="systray">
          <svg viewBox="0 0 10 10"><path d="m2 6.500 3-3 3 3" fill="none" stroke="#eee"/></svg>
          <svg viewBox="0 0 10 10"><path d="M2 7a2 2 0 0 1 0-3.500A3 3 0 0 1 8 4" fill="none" stroke="#ddd" stroke-width="1.500"/><circle cx="6.500" cy="7" r="3" fill="#d83030"/><path d="m5.500 6 2 2M7.500 6l-2 2" stroke="#fff" stroke-width=".8"/></svg>
          <svg viewBox="0 0 10 10"><path d="M.8 4.500q4.200-4 8.400 0M2.300 6q2.700-2.500 5.400 0M3.700 7.500q1.300-1 2.600 0" fill="none" stroke="#eee"/><circle cx="5" cy="8.500" r=".8" fill="#eee"/></svg>
          <svg viewBox="0 0 10 10"><path d="M.7 3.800h1.500L4.500 2v6L2.200 6.200H.7zM6 3.500q1 1.500 0 3M7.500 2.500q2 2.500 0 5" fill="none" stroke="#eee" stroke-width=".9"/></svg>
          <svg viewBox="0 0 10 10"><path d="M3 3h5.500v5H3zM9.200 4.500v2" fill="none" stroke="#eee"/><path d="M1 1v2h2V1M2 3v3" stroke="#eee" fill="none"/><path d="M4 4h2v3H4z" fill="#eee"/></svg>
          <span class="clock">15:18<br />04/10/2022</span>
        </div>
      </footer>`;
  }
}
